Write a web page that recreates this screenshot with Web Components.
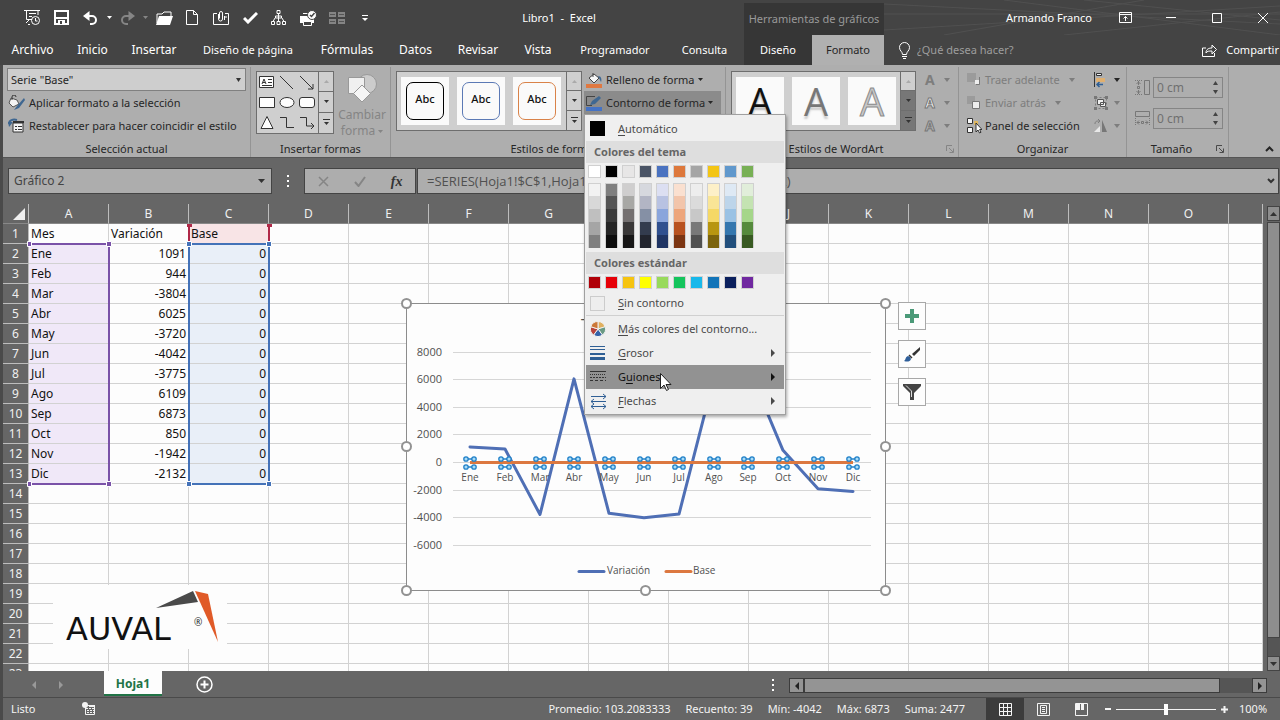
<!DOCTYPE html>
<html lang="es">
<head>
<meta charset="utf-8">
<title>Libro1 - Excel</title>
<style>
html,body{margin:0;height:100%}
body{background:#444;font:11px/16px "Noto Sans","Open Sans",sans-serif;color:#262626;overflow:hidden}
</style>
</head>
<body>
<xl-app></xl-app>
<script>
const BASE=`*{box-sizing:border-box}
button,input,select{font:inherit;color:inherit;background:none;border:0;margin:0;padding:0;outline:0}
button{white-space:nowrap;cursor:default}
svg{display:block;flex:none}`;
function define(tag,css,html,init){
  const t=document.createElement('template');
  t.innerHTML=`<style>${BASE}${css}</style>${html}`;
  customElements.define(tag,class extends HTMLElement{
    connectedCallback(){
      if(this.shadowRoot)return;
      this.attachShadow({mode:'open'}).append(t.content.cloneNode(true));
      if(init)init(this.shadowRoot,this);
    }
  });
}
const svg=(w,h,b)=>`<svg width="${w}" height="${h}" viewBox="0 0 ${w} ${h}" fill="none" stroke="currentColor" aria-hidden="true">${b}</svg>`;
const down=svg(7,4,'<path d="M0 0h7L3.5 4z" fill="currentColor" stroke="none"/>');
const up=svg(7,4,'<path d="M0 4h7L3.5 0z" fill="currentColor" stroke="none"/>');
const tiny=svg(5,3,'<path d="M0 0h5L2.500 3z" fill="currentColor" stroke="none"/>');
const caret=svg(6,4,'<path d="M0 0h6L3 4z" fill="currentColor" stroke="none"/>');
const launcher=svg(8,8,'<path d="M.5 6V.5H6M3 3l4 4M7.500 3.500v4h-4"/>');

/* ---------- title bar ---------- */
const qat=[
 ['Vista previa',svg(17,17,'<path d="M0 1.500h16M2.500 2v8.500H8M14 2v4M5 4.500h7M5 7.500h3M2 14l3-3M6 15.500H4" /><circle cx="11.500" cy="11.500" r="4"/><path d="M11.500 9v3h2"/>')],
 ['Guardar',svg(15,15,'<path d="M1 1h13v13H1z" stroke-width="2"/><path d="M1 7h13v2H1zM4 10h7v5H4z" fill="currentColor" stroke="none"/><path d="M6 11h2v3H6z" fill="#444" stroke="none"/>')],
 ['Deshacer',svg(15,14,'<path d="M2 5h7a4 4 0 0 1 0 8H7" stroke-width="2"/><path d="M6.500 0v10L0 5z" fill="currentColor" stroke="none"/>')],
 ['Lista deshacer',tiny],
 ['Rehacer',svg(15,14,'<path d="M13 5H6a4 4 0 0 0 0 8h2" stroke-width="2"/><path d="M8.500 0v10L15 5z" fill="currentColor" stroke="none"/>'),'off'],
 ['Lista rehacer',tiny,'off'],
 ['Abrir',svg(17,14,'<path d="M1 12V3h5l2-2h7v5" /><path d="M0 14 3 5h14l-3 9z" fill="currentColor" stroke="none"/>')],
 ['Nuevo',svg(12,15,'<path d="M.5.5h7l4 4v10H.5zM7.500.5v4h4"/>')],
 ['Adjuntar',svg(17,16,'<path d="M4 3.500H.5v11h15v-11H12M12 7h2"/><path d="M5.500 4v5a2 2 0 0 0 4 0V3a1.500 1.500 0 0 0-3 0v5.500M11.500 6v4"/>')],
 ['Ortografía',svg(15,12,'<path d="M1 6l4 4 9-9" stroke-width="3"/>')],
 ['Jerarquía',svg(15,15,'<path d="M6 .5h3v3H6zM4.500 6h6v2h-6zM.5 11.500h3v3h-3zM6 11.500h3v3H6zM11.500 11.500h3v3h-3zM7.500 3.500V12M4 8l-2 3.500M11 8l2 3.500"/>')],
 ['Impresión rápida',svg(17,16,'<path d="M0 6h14v7H0z" fill="currentColor" stroke="none"/><path d="M3.500 11.500h8v4h-8z" fill="#444"/><path d="M3 3.500h5"/><circle cx="12" cy="5" r="4.500" fill="currentColor" stroke="#444"/><path d="M10 5l1.500 1.500L14.500 3" stroke="#444" stroke-width="1.500"/>')],
 ['Dividir',svg(16,12,'<path d="M0 0h7v5H0zM9 0h7v5H9zM0 7h7v5H0zM9 7h7v5H9z" fill="currentColor" stroke="none"/><path d="M1 2.500h5M10 2.500h5M1 9.500h5M10 9.500h5" stroke="#555"/>'),'off'],
 ['Personalizar',svg(6,6,'<path d="M0 .5h6"/><path d="M0 3h6L3 6z" fill="currentColor" stroke="none"/>')]
];
define('xl-titlebar',`
:host{display:grid;grid-template-columns:744px 140px 1fr;height:35px;color:#fff;background:#444;position:relative}
.left{display:flex;align-items:center}
.qat{display:grid;grid-template-columns:28px 30px 28px 10px 26px 10px 28px 28px 30px 28px 29px 30px 27px 30px;width:374px;padding-left:18px;align-items:center;flex:none}
.qat button{display:grid;place-items:center}
.qat .off{color:#858585}
h1{flex:1;margin:0;text-align:center;font-size:11px;font-weight:400;white-space:pre}
.ctx{background:#363636;margin-top:3px;color:#999;display:grid;place-items:center;white-space:nowrap}
.right{display:flex;justify-content:flex-end;align-items:center;position:relative;overflow:hidden}
.art{position:absolute;left:0;top:0}
.user{font-size:11px;margin-right:10px;position:relative}
.win{display:grid;grid-template-columns:repeat(4,46px);margin-right:-6px;place-items:center;position:relative}
.win button{display:grid;place-items:center;width:32px;height:30px}
`,`<div class="left"><div class="qat">${qat.map(([n,i,c])=>`<button class="${c||''}" aria-label="${n}">${i}</button>`).join('')}</div><h1>Libro1  -  Excel</h1></div>
<div class="ctx">Herramientas de gráficos</div>
<div class="right"><svg class="art" width="396" height="35" fill="none" stroke="#505050" aria-hidden="true"><path d="M0 4 396 24M0 30 396 6M60 35 260 0M120 0 396 35M180 35 396 12M0 14 396 14M200 0 396 20"/></svg>
<span class="user">Armando Franco</span>
<div class="win">
<button aria-label="Opciones de cinta">${svg(13,11,'<path d="M.5.5h12v10H.5zM.5 2.500h12M6.500 9V4.500M4.500 6.500l2-2 2 2"/>')}</button>
<button aria-label="Minimizar">${svg(10,11,'<path d="M0 5.500h10"/>')}</button>
<button aria-label="Restaurar">${svg(10,10,'<path d="M.5.5h9v9h-9z"/>')}</button>
<button aria-label="Cerrar">${svg(10,10,'<path d="M0 0l10 10M10 0 0 10"/>')}</button></div></div>`);

/* ---------- ribbon tabs ---------- */
define('xl-tabs',`
:host{display:flex;height:30px;color:#fff;background:#444;align-items:stretch}
nav{display:grid;grid-template-columns:65px 55px 68px 120px 78px 59px 66px 54px 100px 79px 68px 72px;flex:none}
nav button{font-size:12px;text-align:center}
nav .small{font-size:11px}
.ctx{background:#363636}
.on{background:#b0b0b0;color:#262626}
.tell{display:flex;align-items:center;gap:6px;color:#9d9d9d;margin-left:14px;flex:1;white-space:nowrap}
.tell svg{color:#fff}
.tell input{width:140px}
.tell input::placeholder{color:#9d9d9d;opacity:1}
.share{display:flex;align-items:center;gap:8px;margin-right:1px}
`,`<nav></nav><label class="tell">${svg(13,17,'<path d="M4.500 12.500c0-3-3-3.500-3-7a5 5 0 0 1 10 0c0 3.500-3 4-3 7zM4 14.500h5M5 16.500h3"/>')}<input type="text" placeholder="¿Qué desea hacer?" aria-label="¿Qué desea hacer?"></label>
<button class="share">${svg(16,14,'<path d="M4 5H.5v8.500h12V10M4 10c0-4 3-5 6-5V2l4.500 4.500L10 11V8C7 8 5 8 4 10z"/>')}Compartir</button>`,
root=>{
  root.querySelector('nav').innerHTML=['Archivo','Inicio','Insertar','Diseño de página','Fórmulas','Datos','Revisar','Vista','Programador','Consulta','Diseño','Formato']
   .map((t,i)=>`<button class="${i===3||i>7?'small':''} ${i===10?'ctx':''} ${i===11?'on':''}">${t}</button>`).join('');
});

/* ---------- ribbon ---------- */
define('xl-group',`
:host{display:flex;flex-direction:column;padding-top:3px;height:90px;position:relative;border-right:1px solid #949494;flex:none;margin-top:2px}
.body{flex:1;display:flex;align-items:flex-start}
.foot{display:flex;align-items:center;height:16px}
.foot span{flex:1;text-align:center;white-space:nowrap}
.foot button{color:#4a4a4a;margin-right:4px}
:host([muted]) .foot button{color:#858585}
`,`<div class="body"><slot></slot></div><div class="foot"><span></span></div>`,
(root,host)=>{
  root.querySelector('.foot span').textContent=host.getAttribute('label');
  if(host.hasAttribute('launcher'))root.querySelector('.foot').insertAdjacentHTML('beforeend',`<button aria-label="Más opciones">${launcher}</button>`);
});
define('xl-gallery',`
:host{display:flex;height:60px;border:1px solid #6e6e6e;background:#cfcfcf}
:host([tall]){height:63px}
.items{flex:1}
.side{display:grid;grid-template-rows:repeat(3,1fr);width:15px;border-left:1px solid #6e6e6e}
.side button{display:grid;place-items:center;width:100%;border-bottom:1px solid #6e6e6e;color:#333}
.side button:first-child{color:#aaa}
.side button:last-child{border:0}
:host([dark]) .side button:not(:first-child){background:#777}
`,`<div class="items"><slot></slot></div><div class="side"><button aria-label="Fila anterior">${svg(5,3,'<path d="M0 3h5L2.500 0z" fill="currentColor" stroke="none"/>')}</button><button aria-label="Fila siguiente">${tiny}</button><button aria-label="Más">${svg(7,7,'<path d="M0 .5h7"/><path d="M1 3h5l-2.500 3z" fill="currentColor" stroke="none"/>')}</button></div>`);

const front=svg(16,16,'<path d="M1 1h9v9H1z" fill="#9b9b9b" stroke="none"/><path d="M10 12.500h3.500V5" stroke="#777"/><path d="M9 8h4v4H9z" fill="#eee" stroke="none"/>');
const back=svg(16,16,'<path d="M1 1h8v8H1z" fill="#9b9b9b" stroke="none"/><path d="M6.500 6.500h7v7h-7z" fill="#eee" stroke="#777"/>');
const spin=(n)=>`<div class="spin"><input type="text" value="0 cm" aria-label="${n} de forma"><div><button aria-label="Aumentar ${n}">${svg(5,4,'<path d="M0 4h5L2.500 0z" fill="currentColor" stroke="none"/>')}</button><button aria-label="Reducir ${n}">${svg(5,4,'<path d="M0 0h5L2.500 4z" fill="currentColor" stroke="none"/>')}</button></div></div>`;
define('xl-ribbon',`
:host{display:flex;height:93px;background:#aeaeae;border-bottom:1px solid #555;position:relative;z-index:5}
.cmd{display:flex;align-items:center;gap:3px;height:23px}
.col{display:flex;flex-direction:column;margin-top:-2px}
.sel{width:239px;margin-left:4px}
.sel .cmd{gap:4px;padding-left:1px}
.combo{position:relative;height:23px}
.combo select{appearance:none;width:100%;height:100%;background:#cecece;border:1px solid #808080;padding:0 3px}
.combo svg{position:absolute;right:5px;top:10px;pointer-events:none}
.dim{color:#7d7d7d}
.previews{display:flex;gap:8px;padding:5px 4px}
.previews button{width:48px;height:48px;background:#fafafa;display:grid;place-items:center;color:#111}
.previews i{font-style:normal;display:grid;place-items:center;width:38px;height:38px;border:1px solid;border-radius:7px}
.previews b{font-weight:500;line-height:14px;color:#111;margin-top:-4px}
.big{display:flex;flex-direction:column;align-items:center;width:56px;margin-top:3px;font-size:12px;color:#858585}
.big span{display:flex;gap:3px;align-items:center}
.big svg+span{margin-top:2px}
.wa button{font:500 38px/48px "Open Sans",sans-serif}
.fx .cmd{gap:9px;font-weight:700;font-size:14px}
.fx{margin-left:9px}
.shapes{display:grid;grid-template-columns:repeat(3,20px);grid-template-rows:repeat(3,20px);place-items:center}
.shapes button{display:grid;place-items:center;color:#333}
.outline .cmd{padding-left:2px}
.anchor{position:relative;background:#8b8b8b;width:137px}
xl-menu{position:absolute;left:0;top:23px}
.far{margin-left:6px}
.pair .cmd{gap:5px}
.size{display:grid;grid-template-columns:19px 70px;row-gap:10px;align-items:center;padding:7px 0 0 7px;color:#777}
.spin{display:flex;border:1px solid #858585;height:21px;align-items:center;padding:0 4px 0 3px;color:#444}
.spin input{flex:1;min-width:0;color:#707070;font-size:12px}
.spin div{display:grid;gap:5px}
.spin button{display:block}
.end{flex:1;display:flex;justify-content:flex-end;align-items:flex-end;padding:0 6px 5px 0}
`,`
<xl-group label="Selección actual" style="width:248px"><div class="col sel">
 <label class="combo"><select aria-label="Elemento del gráfico"><option>Serie "Base"</option></select>${svg(5,4,'<path d="M0 0h5L2.500 4z" fill="#333" stroke="none"/>')}</label>
 <button class="cmd">${svg(17,16,'<path d="M3 3l6 2 2 4-6 3-4-4z" fill="#f4f4f4" stroke="#555"/><path d="M4 5V2a2 2 0 0 1 4 0" stroke="#333"/><path d="M16 3 9 11l-3 4 5-2 6-8z" fill="#3f6791" stroke="none"/>')}Aplicar formato a la selección</button>
 <button class="cmd">${svg(17,16,'<path d="M1 6C1 2 5 1 9 2" stroke="#3f6791" stroke-width="2"/><path d="M0 4h5L1 9z" fill="#3f6791" stroke="none"/><path d="M5 5h10v9H5z" fill="#f4f4f4" stroke="#333"/><path d="M5 4h11" stroke="#333" stroke-width="2"/><path d="M7 8.500h2M7 11.500h2M10 8.500h4M10 11.500h4" stroke="#333"/>')}Restablecer para hacer coincidir el estilo</button></div></xl-group>
<xl-group label="Insertar formas" style="width:140px"><xl-gallery tall style="width:78px;margin:1px 0 0 5px"><div class="shapes"></div></xl-gallery>
 <button class="big">${svg(30,32,'<circle cx="20" cy="11" r="9.500" fill="#ccc" stroke="#999"/><path d="M1.500 4.500h16v16h-16z" fill="#f0f0f0" stroke="#999"/><path d="M15 12l8.500 8.500L15 29l-8.500-8.500z" fill="#f6f6f6" stroke="#999"/>')}<span>Cambiar</span><span>forma ${tiny}</span></button></xl-group>
<xl-group label="Estilos de forma" launcher style="width:335px;z-index:2"><xl-gallery style="width:186px;margin:1px 2px 0 5px"><div class="previews">
 <button><i style="color:#000"><b>Abc</b></i></button><button><i style="color:#5b79b5"><b>Abc</b></i></button><button><i style="color:#d98248"><b>Abc</b></i></button></div></xl-gallery>
 <div class="col outline"><button class="cmd">${svg(17,16,'<path d="M3 6l5-4 5 4-5 5z" fill="#f7f7f7" stroke="#444"/><path d="M7 5V1" stroke="#444"/><path d="M12 4c3 0 4 3 3 6z" fill="#3f6791" stroke="none"/><path d="M0 12h16v4H0z" fill="#e07840" stroke="none"/>')}Relleno de forma ${tiny}</button>
 <div class="anchor"><button class="cmd" aria-expanded="true">${svg(17,16,'<path d="M9 1.500H.5v9H6" stroke="#444"/><path d="M4 10l2-4 7-5 2 2-6 6z" fill="#3f6791" stroke="none"/><path d="M0 12h16v4H0z" fill="#4472c4" stroke="none"/>')}Contorno de forma ${tiny}</button><xl-menu></xl-menu></div></div></xl-group>
<xl-group label="Estilos de WordArt" launcher muted style="width:233px"><xl-gallery dark style="width:185px;margin:1px 0 0 5px"><div class="previews wa">
 <button style="text-shadow:0 3px 2px #bbb">A</button><button style="color:#777;text-shadow:0 3px 2px #ccc">A</button><button style="color:#c8c8c8;-webkit-text-stroke:1px #8c8c8c">A</button></div></xl-gallery>
 <div class="col dim fx">
 <button class="cmd">A ${caret}</button>
 <button class="cmd"><span style="color:#f4f4f4;-webkit-text-stroke:1px #777">A</span> ${caret}</button>
 <button class="cmd"><span style="color:#b4b4b4;-webkit-text-stroke:1px #777">A</span> ${caret}</button></div></xl-group>
<xl-group label="Organizar" style="width:168px"><div class="col" style="margin-left:7px;width:127px">
 <button class="cmd dim">${front}Traer adelante <span class="far">${caret}</span></button>
 <button class="cmd dim">${back}Enviar atrás <span class="far">${caret}</span></button>
 <button class="cmd">${svg(16,16,'<path d="M1.500.5h5v5h-5zM1.500 9.500h5v5h-5z" fill="#f7f7f7" stroke="#333"/><path d="M8 3h4v4H8z" fill="#e0b860" stroke="none"/><path d="M10 5v9l2-2 1.500 3 1.500-.7-1.400-2.800H16z" fill="#fff" stroke="#333"/>')}Panel de selección</button></div>
 <div class="col pair">
 <button class="cmd" aria-label="Alinear">${svg(16,16,'<path d="M1.500 0v15" stroke="#333"/><path d="M3.500 1.500h5v2h-5z" fill="#eee" stroke="#333"/><path d="M3 6h9v4H3z" fill="#e0b070" stroke="none"/><path d="M4 12.500h6M6.500 10 4 12.500 6.500 15" stroke="#2f5f95" stroke-width="1.500"/>')}${caret}</button>
 <button class="cmd dim" aria-label="Agrupar">${svg(16,16,'<path d="M2.500 2.500h11v11h-11z" stroke-dasharray="2 2"/><path d="M4.500 4.500h6v5h-6zM7.500 7.500h5v4h-5z" fill="#eee" stroke="#555"/><path d="M1 1h3v3H1zM12 1h3v3h-3zM1 12h3v3H1zM12 12h3v3h-3z" fill="#777" stroke="none"/>')}${caret}</button>
 <button class="cmd dim" aria-label="Girar">${svg(16,16,'<path d="M9 2v12h5z" fill="#777" stroke="none"/><path d="M7 8v6H1z" fill="#e8e8e8" stroke="none"/><path d="M2 6c0-3 2-3 4-3M5 1l2 2-2 2"/>')}${caret}</button></div></xl-group>
<xl-group label="Tamaño" launcher style="width:102px"><div class="size">
 ${svg(17,17,'<path d="M10.500 1.500h5v14h-5z"/><path d="M1 1.500h8M1 15.500h8" stroke-dasharray="1 1"/><path d="M4.500 2v4M2.500 5l2-2 2 2M4.500 15v-4M2.500 12l2 2 2-2M3.500 7.500h2v2h-2z"/>')}${spin('alto')}
 ${svg(17,17,'<path d="M1.500 1.500h14v5h-14z"/><path d="M1.500 8v8M15.500 8v8" stroke-dasharray="1 1"/><path d="M3 12.500h3M5 10.500l-2 2 2 2M14 12.500h-3M12 10.500l2 2-2 2M7.500 11.500h2v2h-2z"/>')}${spin('ancho')}</div></xl-group>
<div class="end"><button aria-label="Contraer la cinta">${svg(9,6,'<path d="M1 5l3.500-3.500L8 5" stroke-width="2"/>')}</button></div>`,
root=>{
  const f='fill="#fdfdfd"';
  root.querySelector('.shapes').innerHTML=[
   ['Cuadro de texto',`<path ${f} d="M.5 1.500h14v11H.5z"/><path d="M3 9l2-5 2 5M4 7.500h2M9 4.500h4M9 7.500h4M3 10.500h10"/>`],
   ['Línea','<path d="M1 1l13 13"/>'],
   ['Flecha','<path d="M1 1l13 13M14 9v5H9"/>'],
   ['Rectángulo',`<path ${f} d="M.5 2.500h15v10H.5z"/>`],
   ['Elipse',`<ellipse ${f} cx="8" cy="7.500" rx="7" ry="5"/>`],
   ['Rectángulo redondeado',`<rect ${f} x=".5" y="2.500" width="15" height="10" rx="2.500"/>`],
   ['Triángulo',`<path ${f} d="M8 1.500l6 12H2z"/>`],
   ['Conector','<path d="M1 2.500h6.500v10H15"/>'],
   ['Conector de flecha','<path d="M1 2.500h6.500v8.500H15M12 8l3 3-3 3"/>']
  ].map(([n,p])=>`<button aria-label="${n}">${svg(16,15,p)}</button>`).join('');
});

/* ---------- outline colour menu ---------- */
const theme=[
 ['#ffffff','#f2f2f2','#d8d8d8','#bfbfbf','#a5a5a5','#7f7f7f'],
 ['#000000','#7f7f7f','#555555','#3b3b3b','#252525','#0c0c0c'],
 ['#e7e6e6','#cfcece','#a8a8a5','#747070','#3a3838','#171616'],
 ['#4a5466','#d6d8de','#b2b5c4','#8590a5','#333c4e','#22252e'],
 ['#4a72c0','#dcdff2','#b8c2e2','#8aa5dc','#30508f','#203564'],
 ['#dd783c','#fae0d0','#f2c5ab','#eda67c','#b85220','#7c3512'],
 ['#a5a5a5','#ededed','#dbdbdb','#c8c8c8','#797979','#515151'],
 ['#f3c515','#fdf0c8','#f9e596','#f5d866','#b89610','#7c640c'],
 ['#6098cc','#dee9f4','#bdd5ea','#9ac2e4','#3577ae','#224f7c'],
 ['#78b055','#e1eeda','#c4e3b2','#a5d68a','#558a3c','#385a22']];
const std=['#b00008','#e60008','#f6c410','#ffff00','#98da5c','#14c45c','#18b8ea','#1274b8','#0a1f5c','#7028a0'];
const arrow=svg(4,8,'<path d="M0 0v8l4-4z" fill="currentColor" stroke="none"/>');
define('xl-menu',`
:host{display:block;width:202px;background:#efefef;border:1px solid #a0a0a0;box-shadow:1px 2px 3px #0005;padding:1px;color:#4a4a4a}
.item{display:grid;grid-template-columns:32px 1fr 8px;width:100%;height:24px;align-items:center;text-align:left;padding-right:5px}
.item svg{margin-left:4px}
.item>svg:last-child{margin:0}
.first{height:25px}
.hot{background:#929292;color:#111}
h2{margin:0;font-size:11px;line-height:22px;background:#dedede;padding-left:8px;font-weight:700;color:#666}
.row{display:flex;gap:4px;padding:2px 0 0 2px;height:18px}
.row.s{height:17px}
.row button,.shades button{width:13px;height:13px;border:1px solid #d0d0d0}
.grid{display:flex;gap:4px;padding:2px 0 0 2px;height:71px}
.shades{display:flex;flex-direction:column}
.shades button{border-width:0 1px}
.shades button:first-child{border-top-width:1px}
hr{margin:0 0 1px;border:0;border-top:1px solid #d0d0d0}
.sw{width:15px;height:15px;margin-left:4px;background:#000}
.none{background:#eee;border:1px solid #ccc}
u{text-underline-offset:2px}
`,`<button class="item first"><span class="sw"></span><span><u>A</u>utomático</span></button>
<h2>Colores del tema</h2><div class="row t"></div><div class="grid"></div>
<h2>Colores estándar</h2><div class="row s"></div>
<button class="item"><span class="sw none"></span><span><u>S</u>in contorno</span></button><hr>
<button class="item">${svg(16,16,'<g stroke="#efefef" stroke-width="1"><path d="M8 8V.5A7.500 7.500 0 0 1 15 6z" fill="#e0b060"/><path d="M8 8l7.200-2.300A7.500 7.500 0 0 1 12.400 14z" fill="#6a9a84"/><path d="M8 8l4.400 6a7.500 7.500 0 0 1-8.800 0z" fill="#3462a8"/><path d="M8 8l-4.400 6A7.500 7.500 0 0 1 .8 5.700z" fill="#b8443c"/><path d="M8 8 .8 5.700A7.500 7.500 0 0 1 8 .5z" fill="#cc7838"/></g>')}<span><u>M</u>ás colores del contorno...</span></button>
<button class="item">${svg(15,14,'<path stroke="#2f5f95" d="M0 .5h15M0 3.500h15" /><path stroke="#2f5f95" stroke-width="2" d="M0 8h15"/><path stroke="#2f5f95" stroke-width="3" d="M0 12.500h15"/>')}<span><u>G</u>rosor</span>${arrow}</button>
<button class="item hot">${svg(16,12,'<g stroke="#333"><path d="M0 .5h16"/><path d="M0 3.500h16" stroke-dasharray="1 1"/><path d="M0 6.500h16" stroke-dasharray="2 1"/><path d="M0 9.500h16" stroke-dasharray="3 2"/></g>')}<span>G<u>u</u>iones</span>${arrow}</button>
<button class="item">${svg(17,17,'<g stroke="#2f5f95"><path d="M1 3.500h15M13 1l3 2.500L13 6M1 8.500h15M4 6 1 8.500 4 11M1 13.500h15M13 11l3 2.500-3 2.500M4 11l-3 2.500L4 16"/></g>')}<span><u>F</u>lechas</span>${arrow}</button>`,
root=>{
  const b=c=>`<button style="background:${c}" aria-label="${c}"></button>`;
  root.querySelector('.t').innerHTML=theme.map(t=>b(t[0])).join('');
  root.querySelector('.s').innerHTML=std.map(b).join('');
  root.querySelector('.grid').innerHTML=theme.map(t=>`<div class="shades">${t.slice(1).map(b).join('')}</div>`).join('');
});

/* ---------- formula bar ---------- */
define('xl-formula-bar',`
:host{display:flex;height:46px;background:#666;padding:10px 1px 10px 5px;font-size:13px;color:#444}
.box{background:#adadad;border:1px solid #444;display:flex;align-items:center;height:26px}
.name{width:264px}
.name input{flex:1;padding:0 5px;font-size:12px}
.name svg{margin-right:6px}
.dots{width:32px;display:grid;place-items:center;color:#fff}
.tools{width:112px;justify-content:space-around;color:#858585}
.f{flex:1;margin-left:1px}
.f input{flex:1;padding-left:9px;color:#505050;font-family:"Open Sans",sans-serif}
.f button{padding-right:3px}
em{font:italic 700 14px "Liberation Serif",serif;color:#333}
`,`<div class="box name"><input value="Gráfico 2" aria-label="Cuadro de nombres">${svg(7,4,'<path d="M0 0h7L3.500 4z" fill="#333" stroke="none"/>')}</div>
<div class="dots">${svg(2,12,'<path d="M0 0h2v2H0zM0 5h2v2H0zM0 10h2v2H0z" fill="currentColor" stroke="none"/>')}</div>
<div class="box tools"><button aria-label="Cancelar">${svg(11,11,'<path d="M1 1l9 9M10 1l-9 9" stroke-width="1.500"/>')}</button><button aria-label="Introducir">${svg(12,11,'<path d="M1 6l3.500 4L11 1" stroke-width="2"/>')}</button><button aria-label="Insertar función"><em>fx</em></button></div>
<div class="box f"><input value="=SERIES(Hoja1!$C$1,Hoja1!$A$2:$A$13,Hoja1!$C$2:$C$13,2)" aria-label="Barra de fórmulas"><button aria-label="Expandir">${svg(8,6,'<path d="M1 1l3 3 3-3" stroke="#333" stroke-width="2"/>')}</button></div>`);

/* ---------- worksheet ---------- */
const data=[['Mes','Variación','Base'],['Ene',1091,0],['Feb',944,0],['Mar',-3804,0],['Abr',6025,0],['May',-3720,0],['Jun',-4042,0],['Jul',-3775,0],['Ago',6109,0],['Sep',6873,0],['Oct',850,0],['Nov',-1942,0],['Dic',-2132,0]];
define('xl-sheet',`
:host{display:grid;grid-template-columns:1fr 17px;background:#666;position:relative;overflow:hidden;min-height:0;flex:1}
.view{position:relative;overflow:hidden;background:#fdfdfd}
table{border-collapse:separate;border-spacing:0;table-layout:fixed;width:100%;font-size:12px;line-height:18px}
td,th{height:20px;padding:1px 2px 0;overflow:hidden;white-space:nowrap;border:0 solid #d2d2d2;border-width:0 1px 1px 0;color:#111;font-weight:400;text-align:left}
th{background:#666;color:#f0f0f0;text-align:center;border-color:#bdbdbd;padding:1px 0 0}
thead th{padding:0;border-bottom-color:#888}
td.n{text-align:right}
.a{background:#f0e8f8}.k{background:#e9eff8}.p{background:#f8e4e6}
.over{position:absolute;left:0;top:0}
xl-logo{position:absolute;left:50px;top:381px}
xl-chart{position:absolute;left:397px;top:93px}
.side{position:absolute;left:895px;top:98px;display:grid;gap:10px}
.side button{width:28px;height:28px;background:#fdfdfd;border:1px solid #a8a8a8;display:grid;place-items:center}
.bar{display:flex;flex-direction:column;padding:2px 0 0 4px}
.bar div{background:#8e8e8e;border:1px solid #444;display:grid;place-items:center;height:15px;color:#333}
.bar .thumb{height:416px;margin-top:1px}
.bar .gap{flex:1;background:#555;border-width:0 0 0 1px;height:auto}
`,`<div class="view"><table><colgroup></colgroup><thead></thead><tbody></tbody></table>
<svg class="over" width="300" height="300" fill="none" aria-hidden="true"><g stroke-width="2"><path d="M26 40h80v240H26" stroke="#7a52a8"/><path d="M186 21v19M266 21v19" stroke="#b02848"/><path d="M186 40h80v240h-80z" stroke="#4472b8"/></g>
<g stroke="#fff"><path d="M24.500 37.500h4v5h-4zM24.500 277.500h4v5h-4zM103.500 37.500h5v5h-5zM103.500 277.500h5v5h-5z" fill="#7a52a8"/><path d="M183.500 37.500h5v5h-5zM263.500 37.500h5v5h-5zM183.500 277.500h5v5h-5zM263.500 277.500h5v5h-5z" fill="#4472b8"/></g><path d="M184 20h5v3h-5zM264 20h5v3h-5z" fill="#b02848"/></svg>
<xl-logo></xl-logo><xl-chart></xl-chart>
<div class="side"><button aria-label="Elementos de gráfico">${svg(14,14,'<path d="M5 0h4v5h5v4H9v5H5V9H0V5h5z" fill="#4b9a78" stroke="none"/>')}</button>
<button aria-label="Estilos de gráfico">${svg(18,17,'<path d="M17 1 9 8l2 2 6-6z" fill="#333" stroke="none"/><path d="M1 15c2-1 1-4 4-5l2 1 1 2c-1 3-4 3-7 2z" fill="#2f5f9a" stroke="none"/><path d="M6 9l3 3" stroke="#333" stroke-width="1.500"/>')}</button>
<button aria-label="Filtros de gráfico">${svg(18,16,'<path d="M0 0h18v2l-7 7v7H7V9L0 2z" fill="#444" stroke="none"/><path d="M3 1.500 8.500 7v6" stroke="#ddd"/>')}</button></div></div>
<div class="bar"><div>${up}</div><div class="thumb"></div><div class="gap"></div><div>${down}</div></div>`,
root=>{
  const L='ABCDEFGHIJKLMNO'.split('');
  root.querySelector('colgroup').innerHTML='<col style="width:26px">'+L.map(()=>'<col style="width:80px">').join('')+'<col>';
  root.querySelector('thead').innerHTML='<tr><th aria-label="Seleccionar todo"><svg width="25" height="19"><path d="M22 4v12H10z" fill="#f0f0f0"/></svg></th>'+L.map(l=>`<th scope="col">${l}</th>`).join('')+'<th></th></tr>';
  let h='';
  for(let r=0;r<23;r++){
    h+=`<tr><th scope="row">${r+1}</th>`;
    for(let c=0;c<16;c++){
      const v=data[r]&&c<3?data[r][c]:'';
      let k=typeof v==='number'?'n':'';
      if(data[r]){if(c===0&&r)k+=' a';if(c===2)k+=r?' k':' p'}
      h+=`<td class="${k}">${v}</td>`;
    }
    h+='</tr>';
  }
  root.querySelector('tbody').innerHTML=h;
});
define('xl-logo',`
:host{display:grid;width:174px;height:64px;background:#fdfdfd}
`,`<svg width="174" height="64" viewBox="0 0 174 64" role="img" aria-label="AUVAL"><path d="M103 23l37-17 5 11z" fill="#4a4a4a"/><path d="M142 6l13 3 10 48z" fill="#e05a28"/>
<text x="13" y="55" font-family="DejaVu Sans" font-size="32" fill="#111" stroke="none">AUVAL</text><text x="141" y="41" font-family="Open Sans" font-size="10" fill="#222" stroke="none">®</text></svg>`);

define('xl-chart',`
:host{display:block;width:492px;height:300px}
text{font-family:"Open Sans",sans-serif;fill:#505050;stroke:none}
`,`<svg width="492" height="300" viewBox="400 297 492 300" role="img" aria-label="Título del gráfico"></svg>`,
root=>{
  const X=i=>Math.round(470+i*34.800),Y=v=>462-v*.0138;
  let h='<path d="M406.500 303.500h479v287h-479z" fill="#fdfdfd" stroke="#8c8c8c"/>';
  h+='<text x="581" y="331" font-size="16">Título del gráfico</text>';
  for(let v=8000;v>=-6000;v-=2000){const y=Math.round(Y(v));
    h+=`<path d="M453 ${y}.500h418" stroke="#d6d6d6"/><text x="442" y="${y+4}" font-size="11" text-anchor="end">${v}</text>`;}
  h+=`<path fill="none" stroke="#4f6fb5" stroke-width="3" stroke-linejoin="round" stroke-linecap="round" d="M${data.slice(1).map((d,i)=>X(i)+' '+Y(d[1]).toFixed(1)).join('L')}"/>`;
  h+='<path d="M470 462.500h383" stroke="#dc7840" stroke-width="3"/>';
  data.slice(1).forEach((d,i)=>{const x=X(i);
    h+=`<g fill="#a8dcf8" stroke="#2080c8" stroke-width="1.300">${[[-4,-4],[4,-4],[-4,4],[4,4]].map(([a,b])=>`<circle cx="${x+a}" cy="${463+b}" r="2.200"/>`).join('')}<path d="M${x-2} 459h4M${x-2} 467h4"/></g>`;
    h+=`<text x="${x}" y="481" font-size="10" text-anchor="middle">${d[0]}</text>`;});
  h+='<path d="M579 571.500h25" stroke="#4f6fb5" stroke-width="3" stroke-linecap="round"/><text x="607" y="574" font-size="10">Variación</text>';
  h+='<path d="M666 571.500h25" stroke="#dc7840" stroke-width="3" stroke-linecap="round"/><text x="693" y="574" font-size="10">Base</text>';
  h+=[[406,303],[645,303],[885,303],[406,446],[885,446],[406,590],[645,590],[885,590]].map(([x,y])=>`<circle cx="${x+.5}" cy="${y+.5}" r="4.500" fill="#fff" stroke="#929292" stroke-width="2"/>`).join('');
  root.querySelector('svg').innerHTML=h;
});

/* ---------- sheet tabs and status bar ---------- */
define('xl-sheet-tabs',`
:host{display:flex;height:27px;background:#666;border-bottom:1px solid #4a4a4a;align-items:flex-start;color:#999}
.nav{display:grid;grid-template-columns:27px 27px;place-items:center;height:27px;margin-left:17px}
.tab{width:58px;height:25px;margin-left:30px;padding-top:3px;background:#fdfdfd;color:#217346;font-weight:700;font-size:12px;border-bottom:2px solid #217346}
.add{color:#fff;margin:5px 0 0 34px}
.dots{margin:8px 15px 0 auto;color:#fff}
.bar{display:flex;width:478px;margin:7px 13px 0 0;background:#555;justify-content:space-between}
.bar div{height:15px;width:15px;border:1px solid #3c3c3c;background:#949494;display:grid;place-items:center;color:#222}
.bar .thumb{width:416px;margin-right:auto}
`,`<div class="nav">${svg(4,8,'<path d="M4 0v8L0 4z" fill="currentColor" stroke="none"/>')}${svg(4,8,'<path d="M0 0v8l4-4z" fill="currentColor" stroke="none"/>')}</div>
<button class="tab">Hoja1</button><button class="add" aria-label="Hoja nueva">${svg(17,17,'<circle cx="8.500" cy="8.500" r="7.500" stroke-width="1.500"/><path d="M4.500 8.500h8M8.500 4.500v8" stroke-width="2"/>')}</button>
<div class="dots">${svg(2,12,'<path d="M0 0h2v2H0zM0 5h2v2H0zM0 10h2v2H0z" fill="currentColor" stroke="none"/>')}</div>
<div class="bar"><div>${svg(4,8,'<path d="M4 0v8L0 4z" fill="currentColor" stroke="none"/>')}</div><div class="thumb"></div><div>${svg(4,8,'<path d="M0 0v8l4-4z" fill="currentColor" stroke="none"/>')}</div></div>`);
define('xl-status',`
:host{display:flex;height:22px;background:#666;color:#f4f4f4;align-items:center;padding-left:8px;white-space:nowrap}
.rec{margin-left:46px}
.stats{display:flex;gap:15px;margin-left:auto;margin-right:21px}
.views{display:grid;grid-template-columns:38px 38px 38px;align-self:stretch}
.views button{display:grid;place-items:center}
.views .on{background:#3c3c3c}
.zoom{display:flex;align-items:center;gap:3px;margin-left:5px}
.zoom input{appearance:none;width:100px;height:14px;margin:0 2px;background:linear-gradient(#f4f4f4,#f4f4f4) 0 7px/100% 1px no-repeat}
.zoom input::-webkit-slider-thumb{appearance:none;width:4px;height:11px;background:#fff}
.pct{width:28px;margin:0 13px 0 11px}
`,`<span>Listo</span><button class="rec" aria-label="Grabar macro">${svg(14,14,'<path d="M3.500 3.500h9v9h-9z"/><path d="M4 6.500h9M5 8.500h7M5 10.500h7" stroke-dasharray="2 1"/><path d="M7 3h6v2H7z" fill="currentColor" stroke="none"/><circle cx="3" cy="3" r="3" fill="currentColor" stroke="none"/>')}</button>
<div class="stats"><span>Promedio: 103.2083333</span><span>Recuento: 39</span><span>Mín: -4042</span><span>Máx: 6873</span><span>Suma: 2477</span></div>
<div class="views"><button class="on" aria-label="Normal">${svg(13,13,'<path d="M.5.5h12v12H.5zM4.500 0v13M8.500 0v13M0 4.500h13M0 8.500h13"/>')}</button>
<button aria-label="Diseño de página">${svg(13,13,'<path d="M.5.5h12v12H.5zM3.500 2.500h6v8h-6zM5 4.500h3M5 6.500h3M5 8.500h3"/>')}</button>
<button aria-label="Salto de página">${svg(13,13,'<path d="M.5.5h12v12H.5z"/><path d="M1 1h4v6H1zM6 1h3v6H6z" fill="currentColor" stroke="none"/>')}</button></div>
<div class="zoom"><button aria-label="Alejar">${svg(6,6,'<path d="M0 3h6" stroke-width="2"/>')}</button><input type="range" min="0" max="200" value="100" aria-label="Zoom"><button aria-label="Acercar">${svg(7,7,'<path d="M0 3.500h7M3.500 0v7" stroke-width="2"/>')}</button></div><span class="pct">100%</span>`);
define('xl-pointer',`:host{display:block;position:absolute;left:660px;top:373px;z-index:9}`,
 svg(12,19,'<path d="M.5.5v15l3.500-3.500 2.500 5.500 2-1-2.500-5h5z" fill="#fff" stroke="#222"/>'));
define('xl-app',`
:host{display:flex;flex-direction:column;height:100vh;position:relative}
main{border-left:3px solid #4a4a4a;display:flex;flex-direction:column;flex:1;min-height:0}
`,`<xl-titlebar></xl-titlebar><xl-tabs></xl-tabs><main><xl-ribbon></xl-ribbon><xl-formula-bar></xl-formula-bar><xl-sheet></xl-sheet><xl-sheet-tabs></xl-sheet-tabs><xl-status></xl-status></main><xl-pointer></xl-pointer>`);
</script>
</body>
</html>
